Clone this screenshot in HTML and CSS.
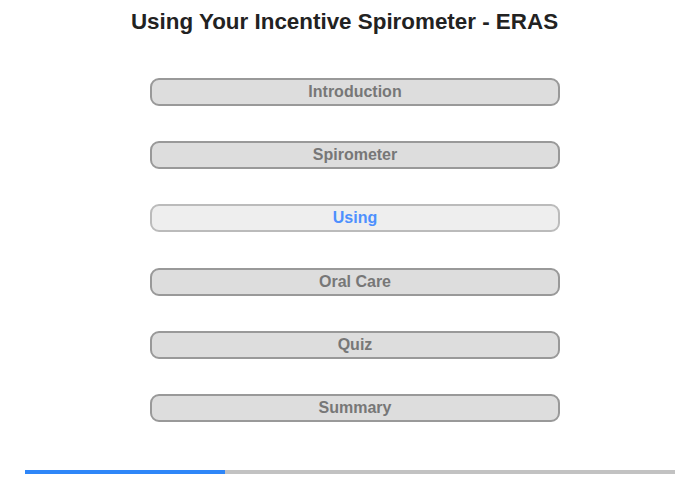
FILE: index.html
```html
<!DOCTYPE html>
<html>
<head>
<meta charset="utf-8">
<link rel="stylesheet" href="styles.css">
</head>
<body>
<div class="page">
  <h1 class="title">Using Your Incentive Spirometer - ERAS</h1>
  <nav class="menu">
    <div class="item">Introduction</div>
    <div class="item">Spirometer</div>
    <div class="item active">Using</div>
    <div class="item">Oral Care</div>
    <div class="item">Quiz</div>
    <div class="item">Summary</div>
  </nav>
  <div class="progress"><div class="fill" style="width:200px"></div></div>
</div>
</body>
</html>
```
FILE: styles.css
```css
html, body {
  margin: 0;
  padding: 0;
  background: #fff;
}
.page {
  width: 700px;
  height: 480px;
  font-family: "Liberation Sans", Arial, sans-serif;
  display: flex;
  flex-direction: column;
}
.title {
  margin: 9px 0 0 0;
  padding-right: 11px;
  font-size: 22.4px;
  font-weight: bold;
  color: #222;
  text-align: center;
  line-height: 26px;
}
.menu {
  margin: 43px 0 0 150px;
  width: 410px;
  display: flex;
  flex-direction: column;
  gap: 35.2px;
}
.item {
  box-sizing: border-box;
  height: 28px;
  border: 2px solid #999;
  border-radius: 9px;
  background: #ddd;
  color: #777;
  font-size: 16px;
  font-weight: bold;
  line-height: 24px;
  text-align: center;
}
.item.active {
  background: #eee;
  border-color: #bbb;
  color: #4d90fe;
}
.progress {
  margin: 48px 0 0 25px;
  width: 650px;
  height: 4px;
  background: #c2c2c2;
}
.fill {
  height: 100%;
  background: #2e86f8;
}
```
